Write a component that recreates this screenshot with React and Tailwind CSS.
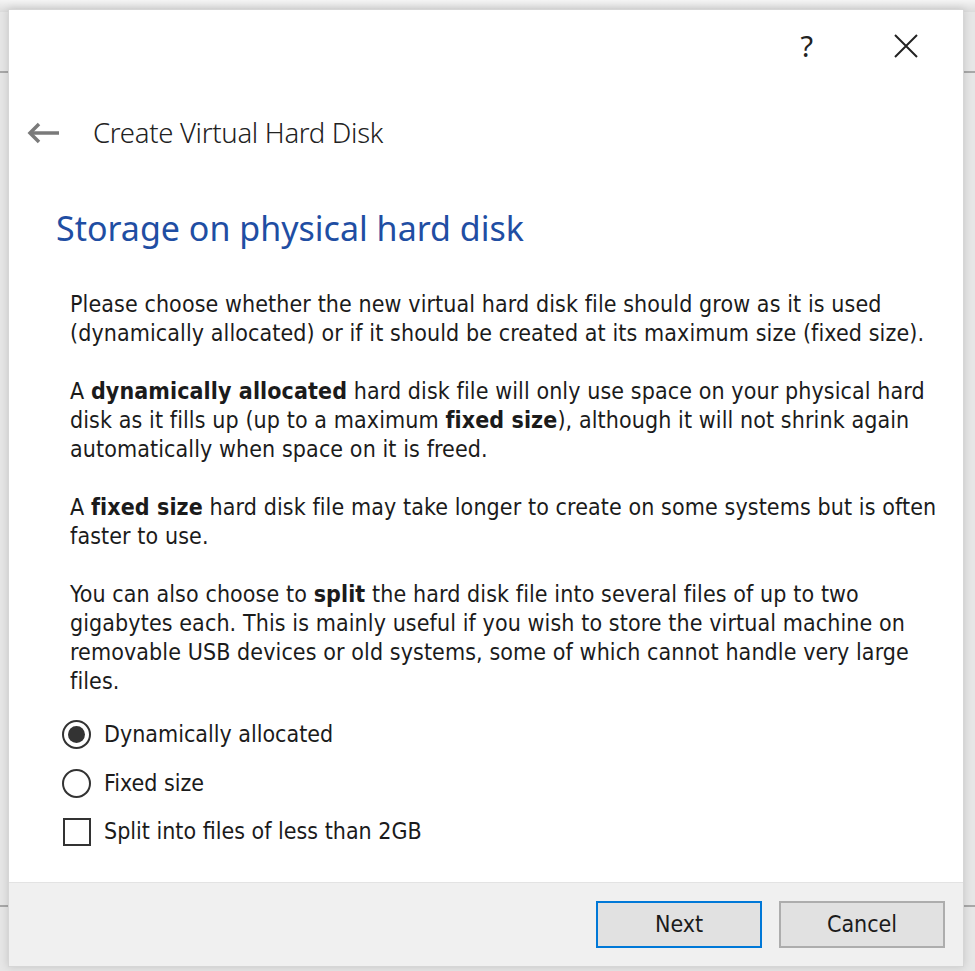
import React from "react";

const body = { fontFamily: '"DejaVu Sans Condensed", "DejaVu Sans", Tahoma, sans-serif' };
const ui = { fontFamily: '"Noto Sans", "Open Sans", sans-serif' };

function Radio({ checked, label }) {
  return (
    <label className="flex items-center gap-[13px] h-[49px]">
      <span className="w-[29px] h-[29px] rounded-full border-2 border-[#333] bg-white flex items-center justify-center">
        {checked && <span className="w-[17px] h-[17px] rounded-full bg-[#333]" />}
      </span>
      <span>{label}</span>
    </label>
  );
}

export default function App() {
  return (
    <div className="relative w-[975px] h-[971px] bg-[#e6e6e6] overflow-hidden">
      {/* background window edges */}
      <div className="absolute left-0 right-0 top-[71px] h-[2px] bg-[#a8a8a8]" />
      <div className="absolute left-0 right-0 top-[905px] h-[2px] bg-[#a8a8a8]" />
      <div className="absolute left-0 right-0 top-0 h-[12px] bg-gradient-to-b from-[#f4f4f4] to-[#dcdcdc]" />

      {/* dialog */}
      <div className="absolute left-[8px] top-[9px] w-[956px] h-[958px] bg-white border border-[#d6d6d6] shadow-[0_0_8px_rgba(0,0,0,0.15)] flex flex-col text-[#1b1b1b]">
        <div className="flex justify-end items-center h-[72px] pr-[44px] gap-[80px]" style={ui}>
          <span className="text-[29px] text-[#222]">?</span>
          <svg width="26" height="26" viewBox="0 0 26 26">
            <path d="M2 2 L24 24 M24 2 L2 24" stroke="#222" strokeWidth="2" />
          </svg>
        </div>

        <div className="flex items-center h-[50px] mt-[26px] pl-[18px]" style={ui}>
          <svg width="34" height="22" viewBox="0 0 34 22">
            <path d="M3 11 H32" stroke="#7a7a7a" strokeWidth="3.5" />
            <path d="M12 2 L3 11 L12 20" stroke="#7a7a7a" strokeWidth="3.5" fill="none" />
          </svg>
          <span className="ml-[32px] text-[27.5px] font-light text-[#222] tracking-[-0.3px]">Create Virtual Hard Disk</span>
        </div>

        <div className="pl-[47px] mt-[48px] text-[34px] text-[#1f4ea3] leading-[44px]" style={ui}>
          Storage on physical hard disk
        </div>

        <div className="pl-[61px] pr-[6px] mt-[40px] text-[23px] leading-[29px] tracking-[0.1px] flex flex-col gap-[29px] whitespace-nowrap" style={body}>
          <p>
            Please choose whether the new virtual hard disk file should grow as it is used
            <br />
            (dynamically allocated) or if it should be created at its maximum size (fixed size).
          </p>
          <p>
            A <b>dynamically allocated</b> hard disk file will only use space on your physical hard
            <br />
            disk as it fills up (up to a maximum <b>fixed size</b>), although it will not shrink again
            <br />
            automatically when space on it is freed.
          </p>
          <p>
            A <b>fixed size</b> hard disk file may take longer to create on some systems but is often
            <br />
            faster to use.
          </p>
          <p>
            You can also choose to <b>split</b> the hard disk file into several files of up to two
            <br />
            gigabytes each. This is mainly useful if you wish to store the virtual machine on
            <br />
            removable USB devices or old systems, some of which cannot handle very large
            <br />
            files.
          </p>
        </div>

        <div className="pl-[53px] mt-[14px] text-[23px] flex flex-col" style={body}>
          <Radio checked label="Dynamically allocated" />
          <Radio label="Fixed size" />
          <label className="flex items-center gap-[13px] h-[47px]">
            <span className="ml-[1px] w-[28px] h-[28px] border-2 border-[#333] bg-white" />
            <span>Split into files of less than 2GB</span>
          </label>
        </div>

        <div className="mt-auto h-[84px] bg-[#f0f0f0] border-t border-[#e3e3e3] flex items-center justify-end gap-[17px] pr-[18px]" style={body}>
          <button className="w-[166px] h-[47px] bg-[#e1e1e1] border-2 border-[#0078d7] text-[23px] text-[#1b1b1b]">Next</button>
          <button className="w-[166px] h-[47px] bg-[#e1e1e1] border-2 border-[#adadad] text-[23px] text-[#1b1b1b]">Cancel</button>
        </div>
      </div>
    </div>
  );
}
